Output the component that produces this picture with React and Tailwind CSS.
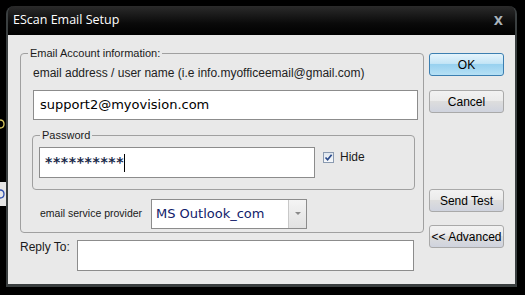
const font = { fontFamily: '"Liberation Sans", Arial, sans-serif' };
const dv = { fontFamily: '"DejaVu Sans", sans-serif' };

const Btn = ({ children, primary, className = "" }) => (
  <div
    className={`h-[23px] w-[75px] rounded-[3px] border flex items-center justify-center text-[12px] text-black ${
      primary
        ? "border-[#3c7fb1] bg-[linear-gradient(#e5f4fc_0%,#c4e5f6_45%,#98d1ef_50%,#b6e0f5_100%)]"
        : "border-[#a9a9a9] bg-[linear-gradient(#f2f2f2_0%,#ebebeb_45%,#dddddd_50%,#cfd3de_100%)]"
    } ${className}`}
  >
    {children}
  </div>
);

export default function App() {
  return (
    <div className="w-[525px] h-[295px] bg-black overflow-hidden flex" style={font}>
      {/* bits of the window behind */}
      <div className="w-[6px] flex flex-col pt-[118px]">
        <svg width="6" height="12" viewBox="0 0 6 12">
          <path d="M0 2 Q4 2 4 6 Q4 10 0 10" fill="none" stroke="#d8c860" strokeWidth="1.3" />
        </svg>
        <div className="h-[52px]" />
        <div className="h-[24px] bg-[#e6e6e6] flex items-center">
          <svg width="6" height="12" viewBox="0 0 6 12">
            <path d="M0 2 Q4 2 4 6 Q4 10 0 10" fill="none" stroke="#3050b0" strokeWidth="1.3" />
          </svg>
        </div>
      </div>

      {/* dialog window */}
      <div className="w-[511px] mt-[6px] h-[281px] flex flex-col rounded-t-[8px] bg-[#1b1b1b] border-x-2 border-b-[3px] border-[#3a3f40]">
        <div className="h-[29px] flex items-center justify-between pl-[5px] rounded-t-[7px] bg-[linear-gradient(#2b2b2b,#0a0a0a_60%,#000)]">
          <span className="text-white text-[12.5px]" style={{ fontFamily: '"Open Sans", "Noto Sans", sans-serif' }}>
            EScan Email Setup
          </span>
          <span className="text-[#aab4bc] font-bold text-[12px] mr-[12px]" style={dv}>
            X
          </span>
        </div>

        <div className="flex-1 bg-[#e9e9e9] flex">
          {/* left column */}
          <div className="ml-[12px] w-[404px] flex flex-col">
            <fieldset className="mt-[11px] border border-[#a0a0a0] rounded-[4px] pb-[3px]">
              <legend className="ml-[7px] px-[2px] text-[11px] leading-[14px] text-[#1a1a1a]">
                Email Account information:
              </legend>
              <div className="ml-[12px] mt-[6px] text-[12px] leading-[14px] text-[#222]">
                email address / user name (i.e info.myofficeemail@gmail.com)
              </div>
              <div className="ml-[12px] mt-[10px] w-[385px] h-[30px] bg-white border border-[#8c8c8c] flex items-center pl-[6px] text-[13px] text-black" style={dv}>
                support2@myovision.com
              </div>

              <fieldset className="ml-[11px] mt-[8px] w-[383px] border border-[#a0a0a0] rounded-[4px] pb-[11px]">
                <legend className="ml-[7px] px-[2px] text-[11px] leading-[14px] text-[#1a1a1a]">Password</legend>
                <div className="flex items-start mt-[5px]">
                  <div className="ml-[6px] w-[276px] h-[31px] bg-white border border-[#8c8c8c] flex items-center pl-[5px]">
                    <span className="text-[14px] font-bold text-[#1a2a4a] tracking-[0.6px]" style={dv}>
                      **********
                    </span>
                    <span className="w-[1px] h-[18px] bg-black" />
                  </div>
                  <div className="ml-[8px] mt-[5px] w-[11px] h-[11px] border border-[#8a9ab0] bg-[linear-gradient(#dfe6ee,#f6f8fa)] flex items-center justify-center">
                    <svg width="9" height="9" viewBox="0 0 9 9">
                      <path d="M1.5 4.5 L3.6 6.8 L7.6 1.8" fill="none" stroke="#2a4a8a" strokeWidth="1.7" />
                    </svg>
                  </div>
                  <span className="ml-[6px] mt-[2px] text-[12px] leading-[16px] text-[#1a1a1a]">Hide</span>
                </div>
              </fieldset>

              <div className="flex items-center mt-[9px]">
                <span className="ml-[19px] w-[111px] whitespace-nowrap text-[10.5px] text-[#1a1a1a]">email service provider</span>
                <div className="w-[156px] h-[30px] bg-white border border-[#8c8c8c] flex items-center">
                  <span className="flex-1 pl-[4px] text-[13px] text-[#10206a]" style={dv}>
                    MS Outlook_com
                  </span>
                  <div className="w-[18px] h-full border-l border-[#c8c8c8] bg-[linear-gradient(#f4f4f4,#e2e2e2)] flex items-center justify-center">
                    <svg width="6" height="4" viewBox="0 0 6 4">
                      <path d="M0 0 H6 L3 3 Z" fill="#8a8a8a" />
                    </svg>
                  </div>
                </div>
              </div>
            </fieldset>

            <div className="flex items-start mt-[7px]">
              <span className="w-[57px] -mt-[1px] text-[12px] leading-[16px] text-[#1a1a1a]">Reply To:</span>
              <div className="w-[337px] h-[31px] bg-white border border-[#8c8c8c]" />
            </div>
          </div>

          {/* right column */}
          <div className="ml-[5px] flex flex-col">
            <Btn primary className="mt-[18px]">OK</Btn>
            <Btn className="mt-[14px]">Cancel</Btn>
            <Btn className="mt-[76px]">Send Test</Btn>
            <Btn className="mt-[13px]">&lt;&lt; Advanced</Btn>
          </div>
        </div>
      </div>
    </div>
  );
}
